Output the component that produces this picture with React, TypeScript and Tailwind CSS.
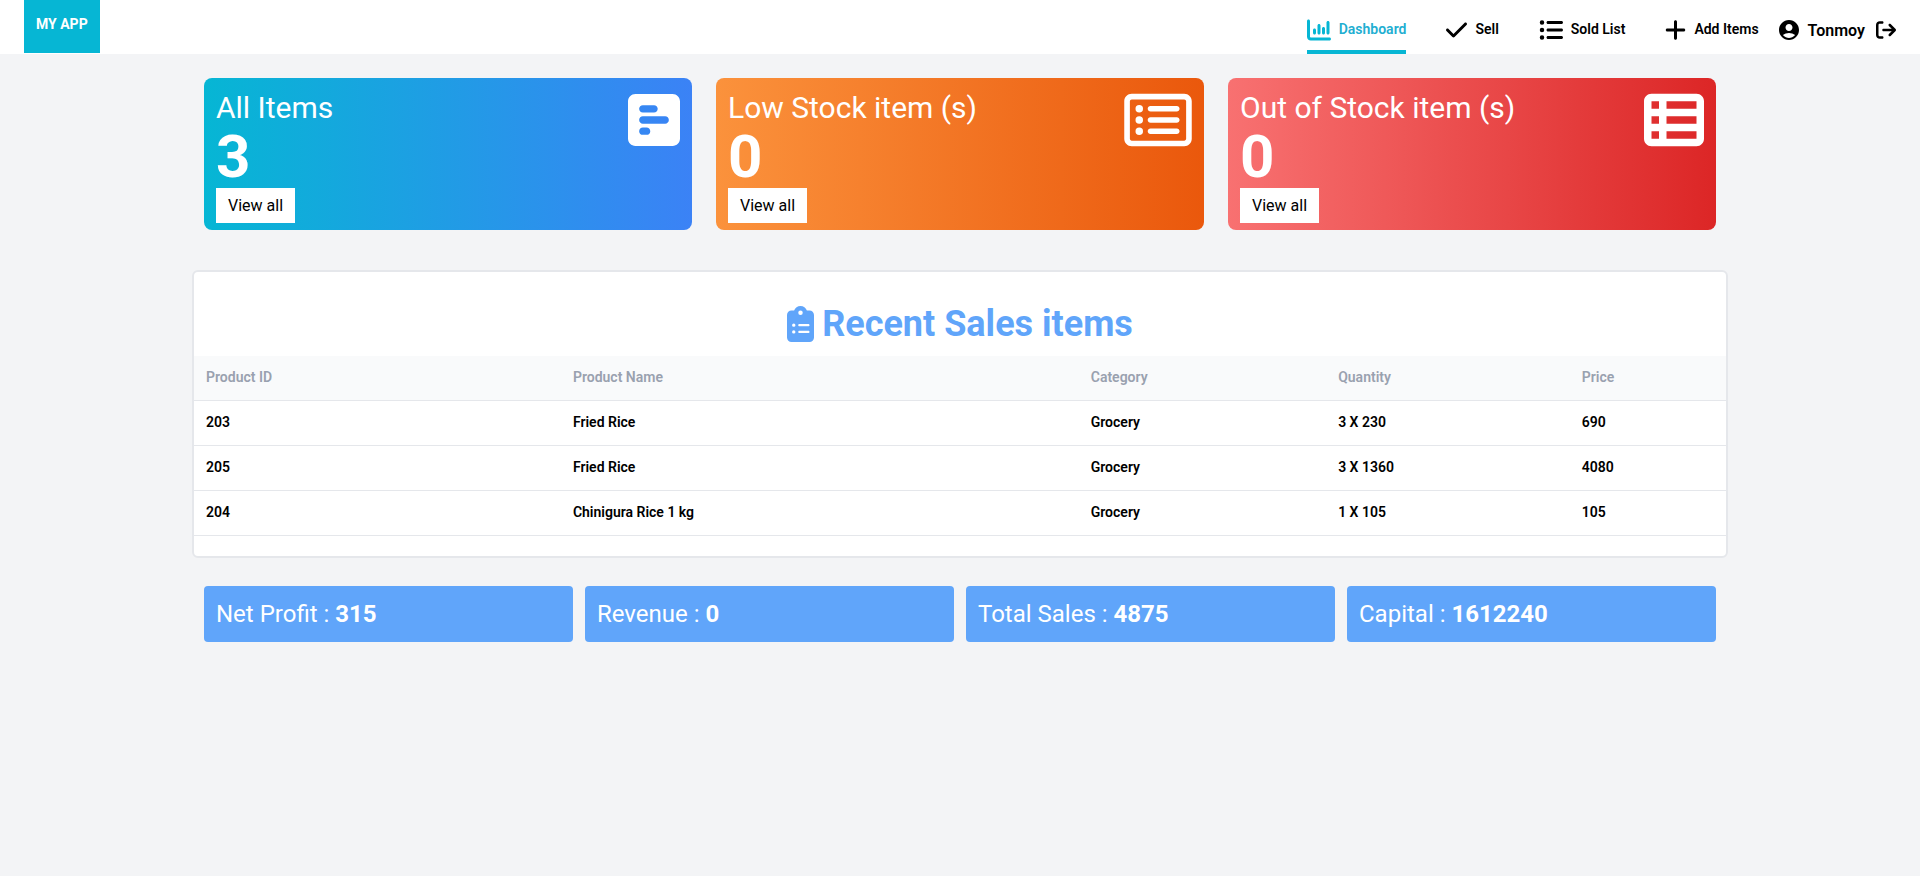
import React from "react";
import {
  FaArrowRightFromBracket,
  FaChartColumn,
  FaCheck,
  FaClipboardList,
  FaListUl,
  FaPlus,
  FaRegRectangleList,
  FaSquarePollHorizontal,
  FaTableList,
} from "react-icons/fa6";
import { MdAccountCircle } from "react-icons/md";

const navItems = [
  { label: "Dashboard", icon: <FaChartColumn className="h-6 w-6" />, active: true },
  { label: "Sell", icon: <FaCheck className="h-6 w-[21px]" />, active: false },
  { label: "Sold List", icon: <FaListUl className="h-6 w-6" />, active: false },
  { label: "Add Items", icon: <FaPlus className="h-6 w-[21px]" />, active: false },
];

const cards = [
  {
    title: "All Items",
    count: 3,
    colors: "from-[#06b6d4] to-[#3b82f6]",
    icon: <FaSquarePollHorizontal className="h-15 w-[52px]" />,
  },
  {
    title: "Low Stock item (s)",
    count: 0,
    colors: "from-[#fb923c] to-[#ea580c]",
    icon: <FaRegRectangleList className="h-15 w-[68px]" />,
  },
  {
    title: "Out of Stock item (s)",
    count: 0,
    colors: "from-[#f87171] to-[#dc2626]",
    icon: <FaTableList className="h-15 w-15" />,
  },
];

const columns = [
  { label: "Product ID", width: "w-[23.95%]" },
  { label: "Product Name", width: "w-[33.8%]" },
  { label: "Category", width: "w-[16.15%]" },
  { label: "Quantity", width: "w-[15.9%]" },
  { label: "Price", width: "w-[10.2%]" },
];

const sales = [
  ["203", "Fried Rice", "Grocery", "3 X 230", "690"],
  ["205", "Fried Rice", "Grocery", "3 X 1360", "4080"],
  ["204", "Chinigura Rice 1 kg", "Grocery", "1 X 105", "105"],
];

const totals = [
  { label: "Net Profit", value: 315 },
  { label: "Revenue", value: 0 },
  { label: "Total Sales", value: 4875 },
  { label: "Capital", value: 1612240 },
];

function Navbar() {
  return (
    <header className="flex items-start justify-between bg-white px-6">
      <a href="#" className="bg-[#06b6d4] px-3 pt-[14px] pb-[19px] text-sm font-bold text-white">
        MY APP
      </a>
      <div className="flex items-stretch">
        <nav className="flex gap-10">
          {navItems.map((item) => (
            <a
              key={item.label}
              href="#"
              className={
                item.active
                  ? "flex items-center gap-2 border-b-4 border-[#06b6d4] pt-[18px] pb-2 text-sm font-semibold text-[#06b6d4]"
                  : "flex items-center gap-2 border-b-4 border-transparent pt-[18px] pb-2 text-sm font-semibold text-black"
              }
            >
              {item.icon}
              <span className={item.active ? "pb-[2px] text-[#22aed1]" : "pb-[2px]"}>{item.label}</span>
            </a>
          ))}
        </nav>
        <div className="ml-[18px] flex items-center pt-[6px] font-semibold text-black">
          <MdAccountCircle className="h-6 w-6" />
          <span className="ml-[7px] pt-[2px]">Tonmoy</span>
          <button type="button" aria-label="Log out" className="ml-[11px]">
            <FaArrowRightFromBracket className="h-5 w-5" />
          </button>
        </div>
      </div>
    </header>
  );
}

export default function App() {
  return (
    <div className="min-h-screen bg-[#f3f4f6] font-['Roboto',sans-serif] text-black">
      <Navbar />
      <main className="mx-auto w-4/5 pt-6">
        <section className="grid grid-cols-3 gap-6 px-3">
          {cards.map((card) => (
            <article
              key={card.title}
              className={`flex items-start justify-between rounded-lg bg-linear-to-r/srgb px-3 pt-3 pb-[7px] text-white ${card.colors}`}
            >
              <div>
                <h2 className="text-3xl">{card.title}</h2>
                <p className="mt-px text-6xl font-bold">{card.count}</p>
                <button type="button" className="mt-px block bg-white px-3 py-[6px] text-base leading-[23px] text-black">
                  View all
                </button>
              </div>
              {card.icon}
            </article>
          ))}
        </section>

        <section className="mt-10 rounded-md border-2 border-gray-200 bg-white pt-8 pb-5">
          <h1 className="flex items-center justify-center gap-2 pb-3 text-4xl font-bold text-[#60a5fa]">
            <FaClipboardList className="h-9 w-[27px]" />
            Recent Sales items
          </h1>
          <table className="w-full table-fixed text-left text-sm">
            <thead className="bg-gray-50 text-gray-400">
              <tr className="border-b border-gray-200">
                {columns.map((column) => (
                  <th key={column.label} className={`px-3 pt-[11px] pb-[13px] font-semibold ${column.width}`}>
                    {column.label}
                  </th>
                ))}
              </tr>
            </thead>
            <tbody>
              {sales.map((row) => (
                <tr key={row[0]} className="border-b border-gray-200">
                  {row.map((cell, index) => (
                    <td key={index} className="px-3 pt-[11px] pb-[13px] font-semibold">
                      {cell}
                    </td>
                  ))}
                </tr>
              ))}
            </tbody>
          </table>
        </section>

        <section className="mt-7 grid grid-cols-4 gap-3 px-3">
          {totals.map((total) => (
            <div key={total.label} className="rounded-sm bg-[#60a5fa] p-3 text-2xl text-white">
              {total.label} : <span className="font-bold">{total.value}</span>
            </div>
          ))}
        </section>
      </main>
    </div>
  );
}
